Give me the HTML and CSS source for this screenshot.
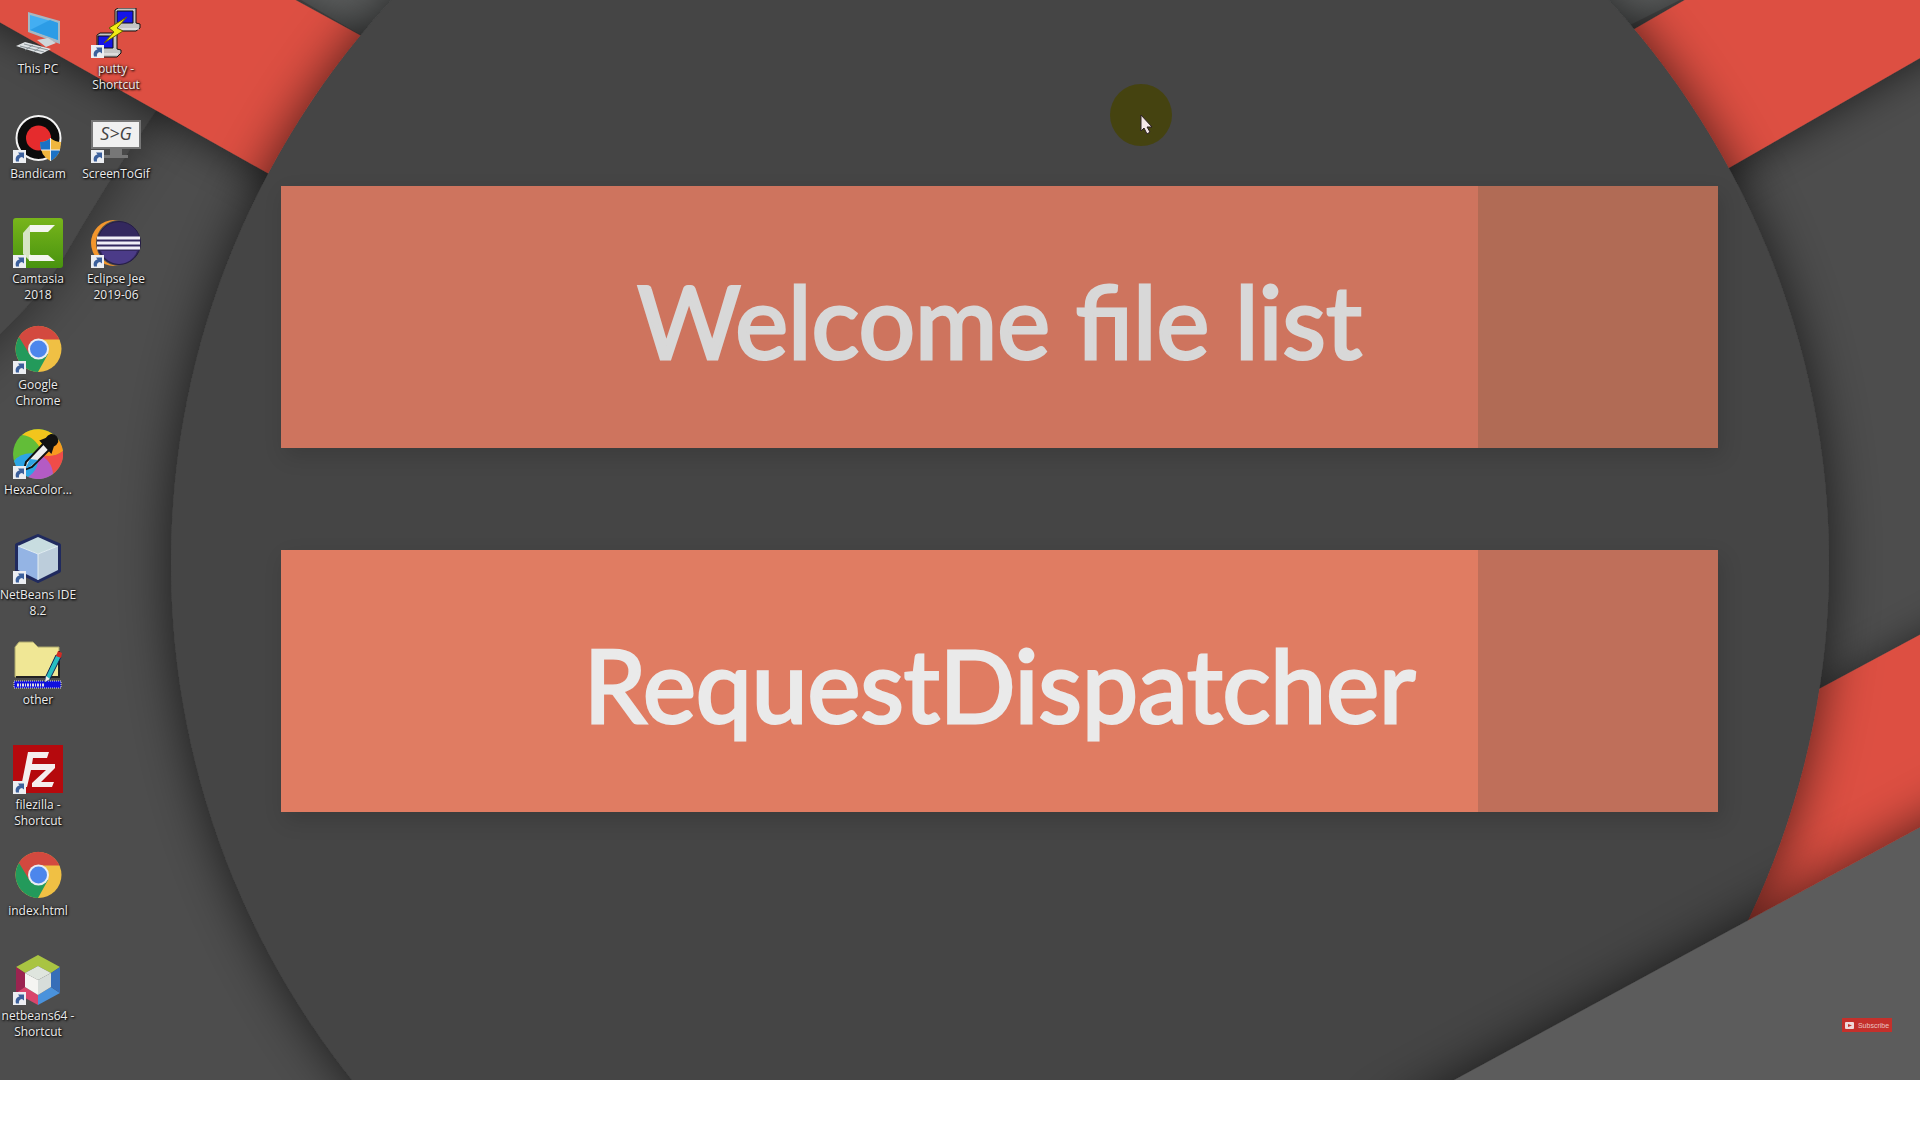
FILE: index.html
```html
<!DOCTYPE html>
<html lang="en">
<head>
<meta charset="utf-8">
<title>Desktop</title>
<link rel="stylesheet" href="styles.css">
</head>
<body>
<svg class="defs" width="0" height="0" aria-hidden="true">
  <symbol id="arrow" viewBox="0 0 13 13"><rect width="13" height="13" fill="#eceef2"/><path d="M3 11.500C2 7.500 3.500 5 6.500 4.500L5 2.500H11V8.500L9 7C6.500 7.500 5.500 9 6 11.500Z" fill="#3c609c"/></symbol>
  <symbol id="chrome" viewBox="0 0 50 50"><circle cx="25.500" cy="25" r="23" fill="#f0c044"/><path d="M5.500 13.500A23 23 0 0 1 46.500 15.500H25.500L16 31Z" fill="#d3493f"/><path d="M6 13A23 23 0 0 0 25 48L35 30L17 31Z" fill="#239a5b"/><circle cx="25.500" cy="25" r="10.500" fill="#e9edf3"/><circle cx="25.500" cy="25" r="8.500" fill="#4c86ec"/></symbol>
</svg>
<main class="desktop">
  <svg class="wallpaper" viewBox="0 0 1920 1080" preserveAspectRatio="none" aria-hidden="true">
    <defs>
      <filter id="soft" x="-20%" y="-20%" width="140%" height="140%"><feDropShadow dx="0" dy="0" stdDeviation="26" flood-color="#000" flood-opacity=".66"/></filter>
      <filter id="band" x="-20%" y="-40%" width="140%" height="180%"><feDropShadow dx="0" dy="4" stdDeviation="20" flood-color="#000" flood-opacity=".55"/></filter>
      <filter id="faint" x="-50%" y="-20%" width="200%" height="140%"><feDropShadow dx="4" dy="2" stdDeviation="24" flood-color="#000" flood-opacity=".4"/></filter>
    </defs>
    <rect width="1920" height="1080" fill="#4d4d4d"/>
    <path d="M-200-100H300L155 112Q105 185 62 260Q25 320-60 385H-200Z" fill="#484848" filter="url(#faint)"/>
    <path d="M250-30H420V70Z" fill="#5c5e5e"/><path d="M1740-30H1560V60Z" fill="#5c5e5e"/>
    <path d="M-100-34V-120H76L420 68V259Z" fill="#dd5043" filter="url(#band)"/>
    <path d="M2000 12V-182L1560 72V265Z" fill="#dd5043" filter="url(#band)"/>
    <path d="M2020 581L1700 753V1080H2020Z" fill="#dd5043" filter="url(#band)"/>
    <circle cx="1000" cy="563" r="829" fill="#444" filter="url(#soft)"/>
    <path d="M1362 1130L2020 773V1130Z" fill="#5b5b5b" filter="url(#soft)"/>
  </svg>

  <nav class="icons" aria-label="Desktop icons">
    <a class="icon" href="#"><svg viewBox="0 0 50 50"><path d="M15 4L47 13V36L15 24Z" fill="#a5b8c4"/><path d="M17 7L45 15V32L17 22Z" fill="#43aef2"/><path d="M17 22L37 12L45 15V32Z" fill="#2c9ce6"/><path d="M24 32L35 30L43 35L33 39Z" fill="#cfd6da"/><path d="M3 38L12 34L38 41L28 46Z" fill="#dfe3e5"/><path d="M7 38L31 44M11 36L35 42M12 42L20 37M20 44L28 39" stroke="#8b9499"/></svg><span>This PC</span></a>
    <a class="icon" href="#"><svg viewBox="0 0 50 50"><circle cx="25.500" cy="25" r="22" fill="#0b0b0b" stroke="#f3f3f3" stroke-width="2"/><circle cx="25.500" cy="25" r="12.500" fill="#e52b2d"/><path d="M27 29Q33 29 37.500 25Q42 29 48 29Q48 43 37.500 48Q27 43 27 29Z" fill="#f0b63e"/><path d="M27 29Q33 29 37.500 25V37H28Q27 33 27 29M37.500 37H47Q45 44 37.500 48Z" fill="#1b72c6"/><path d="M37.500 25V48M28 37H47" stroke="#eee"/><use href="#arrow" y="37" width="13" height="13"/></svg><span>Bandicam</span></a>
    <a class="icon" href="#"><svg viewBox="0 0 50 50"><defs><linearGradient id="green" x2="0" y2="1"><stop stop-color="#78b51b"/><stop offset="1" stop-color="#48930f"/></linearGradient></defs><rect width="50" height="50" rx="3" fill="url(#green)"/><path d="M17 7H42L35 14H16Z" fill="#f4f5ef"/><path d="M10 15L17 7V36L22 43H17L10 36Z" fill="#d6e5c4"/><path d="M16 37H35L42 43H16Z" fill="#f4f5ef"/><use href="#arrow" y="37" width="13" height="13"/></svg><span>Camtasia 2018</span></a>
    <a class="icon" href="#"><svg viewBox="0 0 50 50"><use href="#chrome" width="50" height="50"/><use href="#arrow" y="37" width="13" height="13"/></svg><span>Google Chrome</span></a>
    <a class="icon" href="#"><svg viewBox="0 0 50 50"><circle cx="25" cy="25" r="25" fill="#62bd38"/><path d="M9 6A25 25 0 0 1 43 8L29 23Q22 7 9 6Z" fill="#f2c51c"/><path d="M43 8A25 25 0 0 1 50 22Q39 31 25 25Q34 18 37 6Z" fill="#f89a20"/><path d="M50 22A25 25 0 0 1 40 45Q36 31 25 25Q40 30 50 22Z" fill="#ef4c49"/><path d="M25 25Q39 31 40 45A25 25 0 0 1 15 48Q26 38 25 25Z" fill="#b45bc4"/><path d="M25 25Q27 40 15 48A25 25 0 0 1 1 32Q9 22 25 25Z" fill="#2da5e4"/><path d="M31 14L37 20L19 38L11 41L13 33Z" fill="#eee" stroke="#111" stroke-width="2"/><path d="M17 30L25 31L18 37L12 40Z" fill="#2da5e4"/><path d="M28 12L33 10Q38 3 43 8Q47 13 40 17L38 23Z" fill="#111" stroke="#111" stroke-width="2"/><use href="#arrow" y="37" width="13" height="13"/></svg><span>HexaColor...</span></a>
    <a class="icon" href="#"><svg viewBox="0 0 50 50"><path d="M25 2L46 11V37L25 47L4 37V11Z" fill="#6882b5" stroke="#202a5e" stroke-width="4" stroke-linejoin="round"/><path d="M25 3L45 12L25 20L5 12Z" fill="#c8dde0"/><path d="M5 12L25 20V46L5 36Z" fill="#94b4e4"/><path d="M25 20L45 12V36L25 46Z" fill="#bccddb"/><path d="M5 12L25 20V46M25 20L45 12" fill="none" stroke="#e4eff3"/><use href="#arrow" y="37" width="13" height="13"/></svg><span>NetBeans IDE 8.2</span></a>
    <a class="icon" href="#"><svg viewBox="0 0 50 50"><path d="M2 8L6 3H20L25 8H46V38H2Z" fill="#f0e795" stroke="#aaa66c"/><path d="M3 38H46V12" fill="none" stroke="#222" stroke-width="2"/><rect x="1" y="42" width="47" height="7" fill="#1010dc" stroke="#ddd" stroke-dasharray="1 1"/><path d="M4 46H31" stroke="#ddd" stroke-width="3" stroke-dasharray="2 1 1 1"/><path d="M43 16L48 18L37 40L32 43L33 37Z" fill="#28bfc2" stroke="#125"/><path d="M43 17L48 19L49 14L45 12Z" fill="#d32c25"/><path d="M33 37L37 40L32 43Z" fill="#eee"/></svg><span>other</span></a>
    <a class="icon" href="#"><svg viewBox="0 0 50 50"><path d="M0 1H50V49H0Z" fill="#b5090d"/><path d="M15 8H36L34 14H20L19 20H42V24L28 38H41L39 43H19V39L33 26H18L14 43H8Z" fill="#f5eeee"/><use href="#arrow" y="37" width="13" height="13"/></svg><span>filezilla - Shortcut</span></a>
    <a class="icon" href="#"><svg viewBox="0 0 50 50"><use href="#chrome" width="50" height="50"/></svg><span>index.html</span></a>
    <a class="icon" href="#"><svg viewBox="0 0 50 50"><path d="M25 0L47 12L38 18L25 11L12 18L3 12Z" fill="#a9c442"/><path d="M3 12L12 18V32L3 38Z" fill="#9b2450"/><path d="M3 38L12 32L25 40V50Z" fill="#d9456c"/><path d="M25 50V40L38 32L47 38Z" fill="#4a92dc"/><path d="M47 12V38L38 32V18Z" fill="#376eb8"/><path d="M25 11L38 18L25 25L12 18Z" fill="#dfe5de"/><path d="M12 18L25 25V40L12 32Z" fill="#f5f5f2"/><path d="M25 25L38 18V32L25 40Z" fill="#d7ddda"/><use href="#arrow" y="37" width="13" height="13"/></svg><span>netbeans64 - Shortcut</span></a>
    <a class="icon" href="#"><svg viewBox="0 0 50 50"><g stroke="#111" stroke-width="1"><path d="M24 2L27 0H45V15L49 16V20L45 23H23V19L26 17H24Z" fill="#c5c5c5"/><path d="M26 3H42V15H26Z" fill="#1515e8"/><path d="M6 27L9 25H26V41L30 42V45L26 49H4V44L8 42H6Z" fill="#c5c5c5"/><path d="M7 28H22V40H7Z" fill="#1515e8"/></g><path d="M23 21H48M4 46H27" stroke="#f4f4f4"/><path d="M36 9L18 20L23 24L13 35L32 23L26 20Z" fill="#f2ec14" stroke="#665f00"/><use href="#arrow" y="37" width="13" height="13"/></svg><span>putty - Shortcut</span></a>
    <a class="icon" href="#"><svg viewBox="0 0 50 50"><path d="M19 34H31V42H37V45H13V42H19Z" fill="#777"/><rect x="1" y="8" width="48" height="27" fill="#f0f0f0" stroke="#777" stroke-width="2"/><text x="25" y="27" class="sg">S&gt;G</text><use href="#arrow" y="37" width="13" height="13"/></svg><span>ScreenToGif</span></a>
    <a class="icon" href="#"><svg viewBox="0 0 50 50"><path d="M22 3A23 23 0 0 0 22 47A26 26 0 0 1 22 3Z" fill="#f3962d"/><circle cx="23" cy="25" r="23" fill="#f3962d"/><circle cx="28" cy="25" r="23" fill="#4d4d4d"/><circle cx="28" cy="25" r="21.500" fill="#33285e" stroke="#241c45"/><path d="M10 33A19 19 0 0 0 46 33Z" fill="#4b3b88"/><path d="M6 20H49M6 25H49M6 30H49" stroke="#f1eff7" stroke-width="3"/><use href="#arrow" y="37" width="13" height="13"/></svg><span>Eclipse Jee 2019-06</span></a>
  </nav>

  <section class="banners">
    <h1 class="banner banner-dim">Welcome file list</h1>
    <h1 class="banner">RequestDispatcher</h1>
  </section>

  <svg class="pointer" viewBox="0 0 62 62" aria-hidden="true"><circle cx="31" cy="31" r="31" fill="#454310"/><path d="M31 31V47L34 44L37 50L40 48L37 43H42Z" fill="#f4e8e8" stroke="#2c2024"/></svg>
  <button class="subscribe" type="button"><svg viewBox="0 0 9 7" aria-hidden="true"><rect width="9" height="7" rx="1" fill="#eedada"/><path d="M3 2L7 3.500L3 5Z" fill="#c4302b"/></svg>Subscribe</button>
</main>
</body>
</html>
```
FILE: styles.css
```css
* { box-sizing: border-box; }
body { margin: 0; background: #fff; font-family: "Open Sans", "Noto Sans", sans-serif; }
.defs { position: absolute; }
.desktop {
  position: relative;
  display: flex;
  width: 100%;
  aspect-ratio: 16 / 9;
  overflow: hidden;
  background: #4d4d4d;
}
.wallpaper { position: absolute; inset: 0; width: 100%; height: 100%; }
.icons {
  position: relative;
  display: grid;
  grid-template-rows: repeat(10, 1fr);
  grid-auto-flow: column;
  grid-auto-columns: 78px;
  margin-left: -1px;
  padding-bottom: 28px;
}
.icon {
  display: flex;
  flex-direction: column;
  align-items: center;
  gap: 3px;
  padding-top: 8px;
  color: #ececec;
  font-size: 12px;
  line-height: 16px;
  text-align: center;
  text-decoration: none;
  text-shadow: 1px 1px 2px #000, 0 0 3px #000;
}
.icon svg { width: 50px; height: 50px; flex: none; }
.sg { font: italic 18px "Open Sans", sans-serif; fill: #444; text-anchor: middle; text-shadow: none; }
.banners {
  position: relative;
  flex: 1;
  display: flex;
  flex-direction: column;
  gap: 102px;
  padding: 186px 202px 0 126px;
}
.banner {
  display: flex;
  align-items: center;
  justify-content: center;
  height: 262px;
  margin: 0;
  padding-top: 6px;
  background: linear-gradient(to left, #bf6f5a 240px, #e07c62 240px);
  box-shadow: 4px 8px 20px rgba(0, 0, 0, .14);
  color: #eaeaea;
  font: 400 100px Lato, sans-serif;
  -webkit-text-stroke: 3px currentColor;
  white-space: nowrap;
}
.banner-dim {
  background: linear-gradient(to left, #b16b55 240px, #ce745e 240px);
  color: #d8d8d8;
}
.pointer { position: absolute; left: 1110px; top: 84px; width: 62px; height: 62px; }
.subscribe {
  position: absolute;
  right: 28px;
  bottom: 48px;
  display: flex;
  align-items: center;
  justify-content: center;
  gap: 4px;
  width: 50px;
  height: 14px;
  padding: 0;
  border: 0;
  background: #c4302b;
  color: #eac4c2;
  font: 7px "Liberation Sans", sans-serif;
}
.subscribe svg { width: 9px; height: 7px; flex: none; }
```
